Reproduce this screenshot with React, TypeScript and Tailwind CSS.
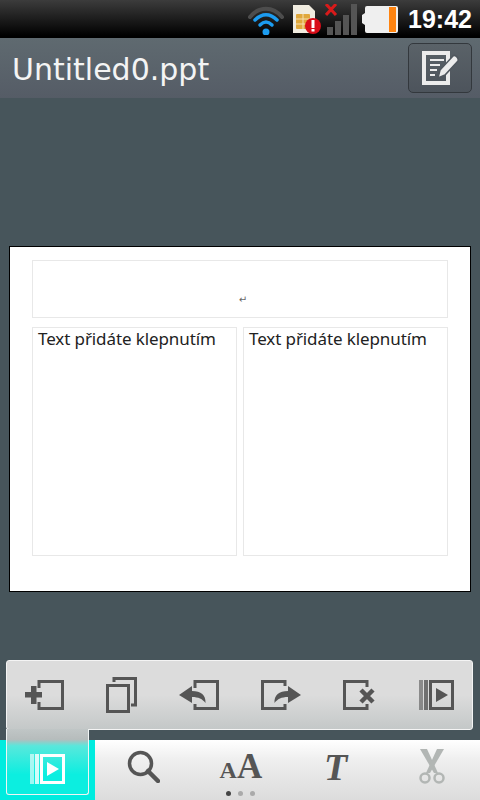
const G = "#555555";

function PlusBox() {
  return (
    <svg width="39" height="30" viewBox="0 0 39 30">
      <path d="M14 8V1.500h23.500v27H14V22" fill="none" stroke={G} strokeWidth="3" />
      <path d="M0 12h6V6h5.500v6H17v5.500h-5.500V24H6v-6.500H0z" fill={G} />
    </svg>
  );
}

function CopyIcon() {
  return (
    <svg width="31" height="36" viewBox="0 0 31 36">
      <path d="M8 5V1.500h21.500V28H25" fill="none" stroke={G} strokeWidth="3" />
      <rect x="1.500" y="8.500" width="21" height="26" fill="none" stroke={G} strokeWidth="3" />
    </svg>
  );
}

function BackIcon() {
  return (
    <svg width="40" height="30" viewBox="0 0 40 30">
      <path d="M16 8V1.500h22.500v27H16V24" fill="none" stroke={G} strokeWidth="3" />
      <path d="M0 15L13 6v5c9 0 14 4 13.500 12c-3-4-7-6-13.500-6v6z" fill={G} />
    </svg>
  );
}

function ForwardIcon() {
  return (
    <svg width="40" height="30" viewBox="0 0 40 30">
      <path d="M24 6V1.500H1.500v27H24V24" fill="none" stroke={G} strokeWidth="3" />
      <path d="M40 15L27 6v5c-9 0-14 4-13.500 12c3-4 7-6 13.500-6v6z" fill={G} />
    </svg>
  );
}

function DeleteIcon() {
  return (
    <svg className="mr-[2px]" width="32" height="30" viewBox="0 0 32 30">
      <path d="M24 7V1.500H1.500v27H24V24" fill="none" stroke={G} strokeWidth="3" />
      <path d="M18 10l12 12M30 10L18 22" fill="none" stroke={G} strokeWidth="4.500" />
    </svg>
  );
}

function SlideShow({ color }: { color: string }) {
  return (
    <svg width="35" height="30" viewBox="0 0 35 30">
      <rect x="0" y="0" width="4" height="30" fill={color} opacity="0.6" />
      <rect x="5" y="0" width="4" height="30" fill={color} opacity="0.8" />
      <rect x="11.500" y="1.500" width="22" height="27" fill="none" stroke={color} strokeWidth="3" />
      <path d="M17 8l12 7-12 7z" fill={color} />
    </svg>
  );
}

function Wifi() {
  return (
    <svg width="36" height="32" viewBox="0 0 36 32" fill="none" strokeLinecap="round">
      <path d="M2 14C11 3 25 3 34 14" stroke="#4d4d4d" strokeWidth="4" />
      <path d="M7 17c7-7 15-7 22 0" stroke="#1c9cf0" strokeWidth="3.500" />
      <path d="M12 22c4-4 8-4 12 0" stroke="#1c9cf0" strokeWidth="3.500" />
      <circle cx="18" cy="29" r="3.500" fill="#1c9cf0" />
    </svg>
  );
}

function Sim() {
  return (
    <svg width="30" height="31" viewBox="0 0 30 31">
      <path d="M1 1h16l6 6v22H1z" fill="#f0ece0" />
      <rect x="4" y="10" width="14" height="15" rx="1" fill="#e0a83c" />
      <path d="M4 15h14M4 20h14M11 10v15" stroke="#f5deb0" strokeWidth="1" />
      <circle cx="21" cy="22" r="8" fill="#d80c18" />
      <rect x="19.500" y="16" width="3" height="8" fill="#fff" />
      <rect x="19.500" y="25" width="3" height="2.500" fill="#fff" />
    </svg>
  );
}

function Signal() {
  return (
    <svg width="33" height="31" viewBox="0 0 33 31">
      <rect x="2" y="23" width="6" height="8" fill="#555" />
      <rect x="10" y="17" width="6" height="14" fill="#555" />
      <rect x="18" y="11" width="6" height="20" fill="#555" />
      <rect x="26" y="0" width="6" height="31" fill="#555" />
      <path d="M1 0l10 11M11 0L1 11" stroke="#d81a1a" strokeWidth="3" />
    </svg>
  );
}

function Battery() {
  return (
    <svg width="36" height="29" viewBox="0 0 36 29">
      <path d="M5 1h29a2 2 0 0 1 2 2v23a2 2 0 0 1-2 2H5a2 2 0 0 1-2-2v-6l-3-2v-8l3-2V3a2 2 0 0 1 2-2z" fill="#efefef" />
      <rect x="27" y="2" width="7" height="25" fill="#ff8410" />
    </svg>
  );
}

function EditIcon() {
  return (
    <svg width="37" height="34" viewBox="0 0 37 34">
      <path d="M2 2h24v30H2z" fill="none" stroke="#ececec" strokeWidth="4" />
      <path d="M8 9h14M8 14h10M8 19h7M8 24h5" stroke="#ececec" strokeWidth="2" />
      <path d="M16 27l2-8L31 5c2-2 6 2 5 5L23 24z" fill="#ececec" stroke="#50575e" strokeWidth="1.500" />
    </svg>
  );
}

function SearchIcon() {
  return (
    <svg width="33" height="33" viewBox="0 0 33 33" fill="none" stroke="#555">
      <circle cx="13.500" cy="13.500" r="11" strokeWidth="3.500" />
      <path d="M21 21l10 10" strokeWidth="4.500" strokeLinecap="round" />
    </svg>
  );
}

function Scissors() {
  return (
    <svg width="26" height="35" viewBox="0 0 26 35" fill="none">
      <path d="M1 0l14 24h4L8 0z" fill="#b2b6b4" />
      <path d="M25 0L11 24H7L18 0z" fill="#b2b6b4" />
      <circle cx="6" cy="29" r="4.500" stroke="#b2b6b4" strokeWidth="2.500" />
      <circle cx="20" cy="29" r="4.500" stroke="#b2b6b4" strokeWidth="2.500" />
    </svg>
  );
}

function Placeholder() {
  return (
    <div className="border border-[#e8e8e8] px-[5px] text-[17px] leading-[21px] tracking-[-0.1px] text-[#222] font-['Noto_Sans',sans-serif]">
      Text přidáte klepnutím
    </div>
  );
}

export default function App() {
  return (
    <div className="flex h-[800px] w-[480px] flex-col overflow-hidden bg-[#47555b]">
      <div className="flex h-[38px] items-center justify-end bg-[linear-gradient(#3c3c3c,#000_95%)] pr-2">
        <Wifi />
        <div className="ml-2"><Sim /></div>
        <div className="ml-[3px]"><Signal /></div>
        <div className="ml-1"><Battery /></div>
        <span className="ml-[10px] font-['Liberation_Sans',sans-serif] text-[25px] font-bold leading-none text-white">19:42</span>
      </div>

      <div className="flex h-[60px] items-center justify-between bg-[linear-gradient(#5f6a70,#555c66)] pl-3 pr-2">
        <span className="pt-1 font-['DejaVu_Sans',cursive] text-[30px] leading-none text-[#f4f4f4]">Untitled0.ppt</span>
        <div className="flex h-[50px] w-16 items-center justify-center rounded-[5px] border border-[#33383d] bg-[linear-gradient(#5a6268,#4d545c)]">
          <EditIcon />
        </div>
      </div>

      <div className="mx-[9px] mt-[148px] h-[346px] w-[462px] border border-black bg-white px-[22px] pt-[13px]">
        <div className="flex h-[58px] items-end justify-center border border-[#e8e8e8] pb-[12px] pl-[6px] font-['DejaVu_Sans',sans-serif] text-[10px] leading-[10px] text-[#666]">↵</div>
        <div className="mt-[9px] grid h-[229px] grid-cols-2 gap-[6px]">
          <Placeholder />
          <Placeholder />
        </div>
      </div>

      <div className="relative z-10 mx-[6px] mt-[68px] flex h-[70px] w-[467px] items-center justify-between rounded-[3px] border border-[#f4f4f4] bg-[linear-gradient(#dcdcdc,#dcdcdc_50%,#c4c8c8)] pl-[18px] pr-[18px]">
        <PlusBox />
        <CopyIcon />
        <BackIcon />
        <ForwardIcon />
        <DeleteIcon />
        <SlideShow color="#555" />
      </div>

      <div className="mt-[10px] grid h-[60px] grid-cols-[95px_repeat(4,1fr)] bg-[linear-gradient(#fff,#f0f0f0_30%,#e4e4e4_70%,#dcdcdc)]">
        <div className="relative flex items-center justify-center bg-[#00ecdf]">
          <div className="absolute left-[6px] top-[-11px] z-10 h-[66px] w-[83px] rounded-b-[3px] border-x border-b border-[#f0f4f4] bg-[linear-gradient(#c0c6c6,#b6bcbc_16%,#58e8dc_26%,#0ceee0_70%)]" />
          <div className="relative z-20 mb-[2px]"><SlideShow color="#fff" /></div>
        </div>
        <div className="flex items-center justify-center pb-[7px]"><SearchIcon /></div>
        <div className="relative flex items-center justify-center pb-[7px]">
          <span className="pl-[3px] font-['Liberation_Serif',serif] font-bold leading-none text-[#555]">
            <span className="text-[24px]">A</span>
            <span className="text-[35px]">A</span>
          </span>
          <div className="absolute bottom-[4px] left-[35px] flex gap-[7px]">
            <span className="h-[5px] w-[5px] rounded-full bg-[#444]" />
            <span className="h-[5px] w-[5px] rounded-full bg-[#aaa]" />
            <span className="h-[5px] w-[5px] rounded-full bg-[#aaa]" />
          </div>
        </div>
        <div className="flex items-center justify-center pb-[7px] font-['Liberation_Serif',serif] text-[38px] font-bold italic leading-none text-[#555]">T</div>
        <div className="flex items-center justify-center pb-[7px]"><Scissors /></div>
      </div>
    </div>
  );
}
